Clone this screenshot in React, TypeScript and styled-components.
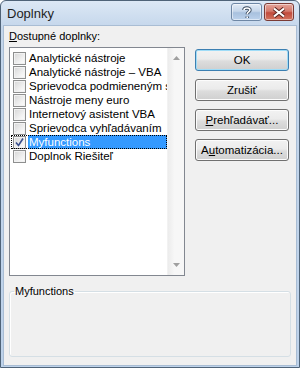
import React from "react";
import styled, { createGlobalStyle } from "styled-components";

const GlobalStyle = createGlobalStyle`
    html, body {
        margin: 0;
        padding: 0;
        background: #ffffff;
    }
    * {
        box-sizing: border-box;
    }
`;

const Window = styled.div`
    width: 300px;
    height: 368px;
    display: flex;
    flex-direction: column;
    border: 1px solid #4f6378;
    border-radius: 6px 6px 0 0;
    background: linear-gradient(#dce8f5, #c4d6eb 27px, #bdd2ea);
    padding: 0 2px 2px 2px;
    font-family: "Liberation Sans", Arial, sans-serif;
    overflow: hidden;
`;

const TitleBar = styled.div`
    height: 26px;
    display: flex;
    align-items: flex-start;
    justify-content: space-between;
    padding: 2px 3px 0 4px;
`;

const Title = styled.span`
    font-size: 13px;
    color: #1e1e1e;
    line-height: 22px;
`;

const TitleButtons = styled.div`
    display: flex;
    gap: 2px;
`;

const CaptionButton = styled.div<{ $close?: boolean }>`
    width: ${p => (p.$close ? 30 : 31)}px;
    height: 18px;
    border: 1px solid ${p => (p.$close ? "#7a3a34" : "#6e87a5")};
    border-radius: 3px;
    background: ${p =>
        p.$close
            ? "linear-gradient(#e5a59b, #d47a6c 45%, #c14b3c 55%, #d3745f)"
            : "linear-gradient(#e2ebf6, #c5d6ea 45%, #a8c1de 55%, #bcd2ec)"};
    display: flex;
    align-items: center;
    justify-content: center;
    box-shadow: inset 0 0 0 1px rgba(255, 255, 255, 0.5);
`;

const Client = styled.div`
    flex: 1;
    background: #f0f0f0;
    border: 1px solid #a9bdd4;
    padding: 3px 6px 8px 5px;
    display: flex;
    flex-direction: column;
`;

const TopArea = styled.div`
    display: flex;
`;

const LeftColumn = styled.div`
    width: 176px;
    display: flex;
    flex-direction: column;
`;

const Label = styled.div`
    font-size: 11px;
    color: #000;
    height: 15px;
    line-height: 15px;
    margin-bottom: 3px;

    & u {
        text-decoration: underline;
    }
`;

const ListBox = styled.div`
    width: 176px;
    height: 229px;
    border: 1px solid #828790;
    background: #fff;
    display: flex;
`;

const Items = styled.div`
    flex: 1;
    min-width: 0;
    overflow: hidden;
    padding: 3px 0 0 1px;
    display: flex;
    flex-direction: column;
`;

const Row = styled.div<{ $focused?: boolean }>`
    height: 14px;
    display: flex;
    align-items: center;
    outline: ${p => (p.$focused ? "1px dotted #000" : "none")};
    outline-offset: -1px;
    padding-left: 2px;
`;

const Box = styled.div`
    width: 13px;
    height: 13px;
    border: 1px solid #8e8f8f;
    background: linear-gradient(135deg, #d6d6d6, #f4f4f4 70%, #fcfcfc);
    box-shadow: inset 0 0 0 1px #f2f2f2;
    display: flex;
    align-items: center;
    justify-content: center;
    flex-shrink: 0;
`;

const ItemText = styled.div<{ $selected?: boolean }>`
    flex: 1;
    min-width: 0;
    height: 14px;
    margin-left: 2px;
    padding-left: 1px;
    font-size: 11.5px;
    line-height: 14px;
    white-space: nowrap;
    overflow: hidden;
    color: ${p => (p.$selected ? "#fff" : "#000")};
    background: ${p => (p.$selected ? "#3399ff" : "transparent")};
`;

const ScrollBar = styled.div`
    width: 17px;
    flex-shrink: 0;
    background: linear-gradient(90deg, #ececec, #f7f7f7 40%, #f7f7f7);
    border-left: 1px solid #f2f2f2;
    display: flex;
    flex-direction: column;
    justify-content: space-between;
    align-items: center;
    padding: 8px 0 8px 0;
`;

const RightColumn = styled.div`
    margin-left: 10px;
    padding-top: 20px;
    display: flex;
    flex-direction: column;
    gap: 8px;
`;

const Button = styled.div<{ $default?: boolean }>`
    width: 94px;
    height: 22px;
    border: 1px solid ${p => (p.$default ? "#3c7fb1" : "#707070")};
    border-radius: 3px;
    background: linear-gradient(#f2f2f2, #ebebeb 45%, #dddddd 55%, #cfcfcf);
    box-shadow: inset 0 0 0 1px ${p => (p.$default ? "#9fdcf7" : "#fcfcfc")};
    font-size: 11.5px;
    color: #000;
    display: flex;
    align-items: center;
    justify-content: center;

    & u {
        text-decoration: underline;
    }
`;

const GroupBox = styled.fieldset`
    margin: 9px 0 0 0;
    padding: 0;
    height: 72px;
    width: 282px;
    border: 1px solid #d5dfe5;
    border-radius: 3px;
    box-shadow: inset 1px 1px 0 #fff;
`;

const Legend = styled.legend`
    font-size: 11px;
    color: #000;
    padding: 0 1px;
    margin-left: 4px;
    line-height: 13px;
`;

const items = [
    "Analytické nástroje",
    "Analytické nástroje – VBA",
    "Sprievodca podmieneným súčtom",
    "Nástroje meny euro",
    "Internetový asistent VBA",
    "Sprievodca vyhľadávaním",
    "Myfunctions",
    "Doplnok Riešiteľ",
];

const Arrow = ({ down }: { down?: boolean }) => (
    <svg width="7" height="4" viewBox="0 0 7 4">
        <path d={down ? "M0 0H7L3.5 4Z" : "M0 4H7L3.5 0Z"} fill="#a0a0a0" />
    </svg>
);

export default function App() {
    return (
        <>
            <GlobalStyle />
            <Window>
                <TitleBar>
                    <Title>Doplnky</Title>
                    <TitleButtons>
                        <CaptionButton>
                            <svg width="10" height="13" viewBox="0 0 10 13">
                                <path
                                    d="M2 4C2 1.5 8 1.2 8 4C8 6 5.2 6 5.2 8.3M5.2 10.5V12"
                                    fill="none"
                                    stroke="#394a5e"
                                    strokeWidth="3.4"
                                />
                                <path
                                    d="M2 4C2 1.5 8 1.2 8 4C8 6 5.2 6 5.2 8.3M5.2 10.5V12"
                                    fill="none"
                                    stroke="#fff"
                                    strokeWidth="1.6"
                                />
                            </svg>
                        </CaptionButton>
                        <CaptionButton $close>
                            <svg width="14" height="11" viewBox="0 0 14 11">
                                <path d="M2 1.5L12 9.5M12 1.5L2 9.5" stroke="#5b2620" strokeWidth="4" />
                                <path d="M2 1.5L12 9.5M12 1.5L2 9.5" stroke="#fff" strokeWidth="2.2" />
                            </svg>
                        </CaptionButton>
                    </TitleButtons>
                </TitleBar>
                <Client>
                    <TopArea>
                        <LeftColumn>
                            <Label>
                                <u>D</u>ostupné doplnky:
                            </Label>
                            <ListBox>
                                <Items>
                                    {items.map(name => {
                                        const selected = name === "Myfunctions";
                                        return (
                                            <Row key={name} $focused={selected}>
                                                <Box>
                                                    {selected && (
                                                        <svg width="9" height="9" viewBox="0 0 9 9">
                                                            <path
                                                                d="M1 4.5L3.5 7.5L8 0.5"
                                                                fill="none"
                                                                stroke="#3b4f8c"
                                                                strokeWidth="1.6"
                                                            />
                                                        </svg>
                                                    )}
                                                </Box>
                                                <ItemText $selected={selected}>{name}</ItemText>
                                            </Row>
                                        );
                                    })}
                                </Items>
                                <ScrollBar>
                                    <Arrow />
                                    <Arrow down />
                                </ScrollBar>
                            </ListBox>
                        </LeftColumn>
                        <RightColumn>
                            <Button $default>OK</Button>
                            <Button>Zrušiť</Button>
                            <Button>
                                <span>
                                    <u>P</u>rehľadávať...
                                </span>
                            </Button>
                            <Button>
                                <span>
                                    A<u>u</u>tomatizácia...
                                </span>
                            </Button>
                        </RightColumn>
                    </TopArea>
                    <GroupBox>
                        <Legend>Myfunctions</Legend>
                    </GroupBox>
                </Client>
            </Window>
        </>
    );
}
